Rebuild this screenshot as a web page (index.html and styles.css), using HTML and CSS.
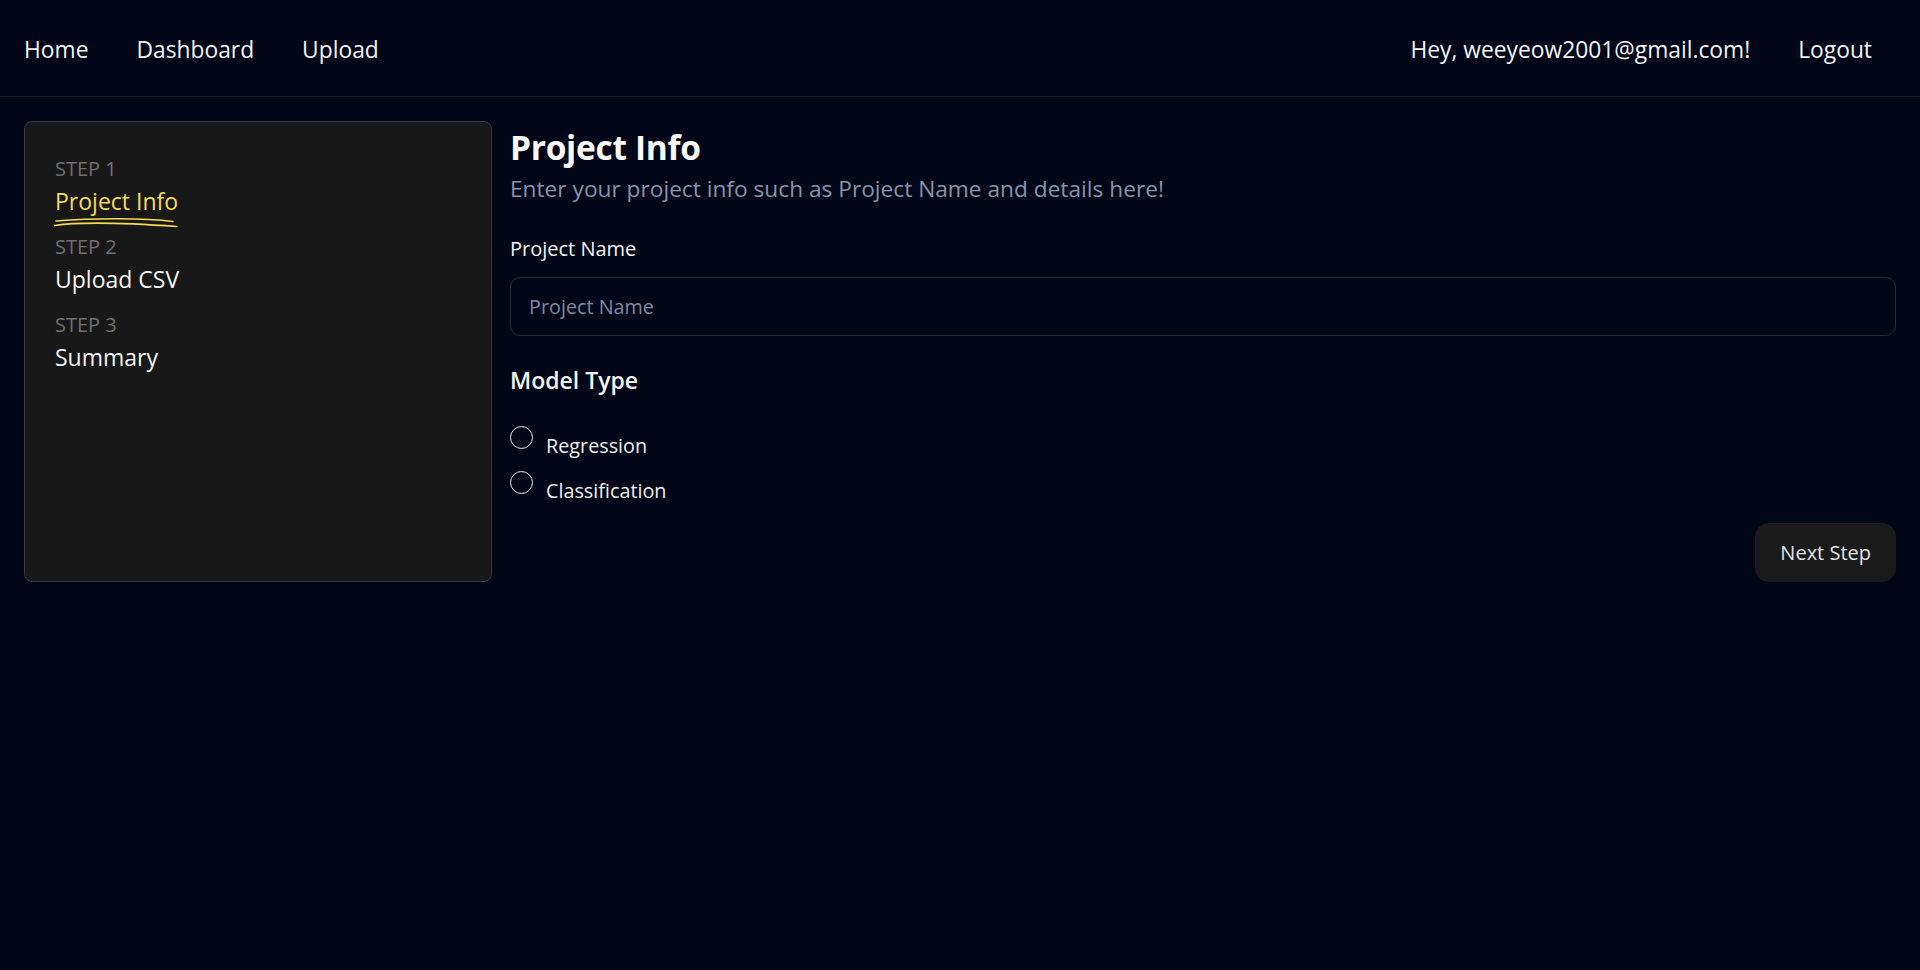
FILE: index.html
```html
<!DOCTYPE html>
<html lang="en">
<head>
<meta charset="utf-8">
<title>Project Info</title>
<link rel="stylesheet" href="styles.css">
</head>
<body>
<nav class="topbar">
  <div class="nav-group">
    <a class="nav-link" href="#">Home</a>
    <a class="nav-link" href="#">Dashboard</a>
    <a class="nav-link" href="#">Upload</a>
  </div>
  <div class="nav-group">
    <span class="nav-link">Hey, weeyeow2001@gmail.com!</span>
    <a class="nav-link" href="#">Logout</a>
  </div>
</nav>
<main class="page">
  <aside class="steps-card">
    <div class="step">
      <div class="step-label">STEP 1</div>
      <div class="step-title active">Project Info<svg class="scribble" width="124" height="12" viewBox="0 0 124 12" fill="none"><path d="M2 5 C 40 2, 90 2, 119 5.5" stroke="#f3dc55" stroke-width="1.6" stroke-linecap="round"/><path d="M0.5 9.5 C 20 6.5, 60 6, 123 10.5" stroke="#f3dc55" stroke-width="1.6" stroke-linecap="round"/></svg></div>
    </div>
    <div class="step">
      <div class="step-label">STEP 2</div>
      <div class="step-title">Upload CSV</div>
    </div>
    <div class="step">
      <div class="step-label">STEP 3</div>
      <div class="step-title">Summary</div>
    </div>
  </aside>
  <section class="form-area">
    <h1 class="form-title">Project Info</h1>
    <p class="form-subtitle">Enter your project info such as Project Name and details here!</p>
    <label class="field-label" for="pname">Project Name</label>
    <input class="text-input" id="pname" type="text" placeholder="Project Name">
    <h2 class="section-title">Model Type</h2>
    <div class="radio-group">
      <label class="radio-row"><input class="radio" type="radio" name="model"><span>Regression</span></label>
      <label class="radio-row"><input class="radio" type="radio" name="model"><span>Classification</span></label>
    </div>
    <div class="actions">
      <button class="next-btn" type="button">Next Step</button>
    </div>
  </section>
</main>
</body>
</html>
```
FILE: styles.css
```css
* { box-sizing: border-box; }

html, body {
  margin: 0;
  padding: 0;
}

body {
  background: #020617;
  color: #f5f5f5;
  font-family: "Open Sans", "Noto Sans", sans-serif;
  min-height: 100vh;
}

.topbar {
  height: 97px;
  display: flex;
  justify-content: space-between;
  align-items: center;
  padding: 0 24px 0 0;
  border-bottom: 1px solid #161b29;
}

.nav-group {
  display: flex;
  align-items: center;
}

.nav-link {
  font-size: 22.8px;
  line-height: 30px;
  color: #f3f4f6;
  text-decoration: none;
  padding: 3px 24px 0;
}

.page {
  display: flex;
  align-items: stretch;
  gap: 18px;
  padding: 24px 24px;
}

.steps-card {
  width: 25%;
  flex: none;
  background: #181818;
  border: 1px solid #3a3a3a;
  border-radius: 8px;
  padding: 33px 30px;
  display: flex;
  flex-direction: column;
  gap: 14px;
}

.step-label {
  font-size: 20px;
  line-height: 28px;
  color: #6f6f6f;
}

.step-title {
  position: relative;
  display: inline-block;
  font-size: 23px;
  line-height: 36px;
  color: #f5f5f5;
}

.step-title.active {
  color: #f3dc55;
}

.scribble {
  position: absolute;
  left: -1px;
  top: 33px;
}

.form-area {
  flex: 1;
  min-width: 0;
  display: flex;
  flex-direction: column;
}

.form-title {
  margin: 1px 0 0;
  font-size: 33.5px;
  line-height: 50px;
  font-weight: 700;
  color: #fafafa;
  letter-spacing: -0.3px;
}

.form-subtitle {
  margin: 0;
  font-size: 22.7px;
  line-height: 33px;
  color: #8794aa;
}

.field-label {
  margin-top: 30px;
  font-size: 20px;
  line-height: 28px;
  font-weight: 500;
  color: #f5f5f5;
}

.text-input {
  margin-top: 14px;
  height: 59px;
  width: 100%;
  background: transparent;
  border: 1px solid #242a38;
  border-radius: 10px;
  padding: 0 18px;
  font-family: inherit;
  font-size: 19.8px;
  color: #f5f5f5;
  outline: none;
}

.text-input::placeholder {
  color: #7d899f;
}

.section-title {
  margin: 28px 0 0;
  font-size: 23px;
  line-height: 32px;
  font-weight: 600;
  color: #f5f5f5;
}

.radio-group {
  margin-top: 30px;
  display: flex;
  flex-direction: column;
}

.radio-row {
  height: 45px;
  display: flex;
  align-items: flex-start;
  font-size: 19.8px;
  color: #f0f0f0;
}

.radio-row span {
  line-height: 30px;
  margin-top: 5px;
}

.radio {
  appearance: none;
  -webkit-appearance: none;
  width: 23px;
  height: 23px;
  margin: 0 13px 0 0;
  border: 1.3px solid #e8e8e8;
  border-radius: 50%;
  background: transparent;
  flex: none;
}

.actions {
  margin-top: 7px;
  display: flex;
  justify-content: flex-end;
}

.next-btn {
  height: 59px;
  padding: 0 25px;
  background: #1a1a1a;
  border: none;
  border-radius: 14px;
  font-family: inherit;
  font-size: 20px;
  color: #e2e2e2;
}
```
